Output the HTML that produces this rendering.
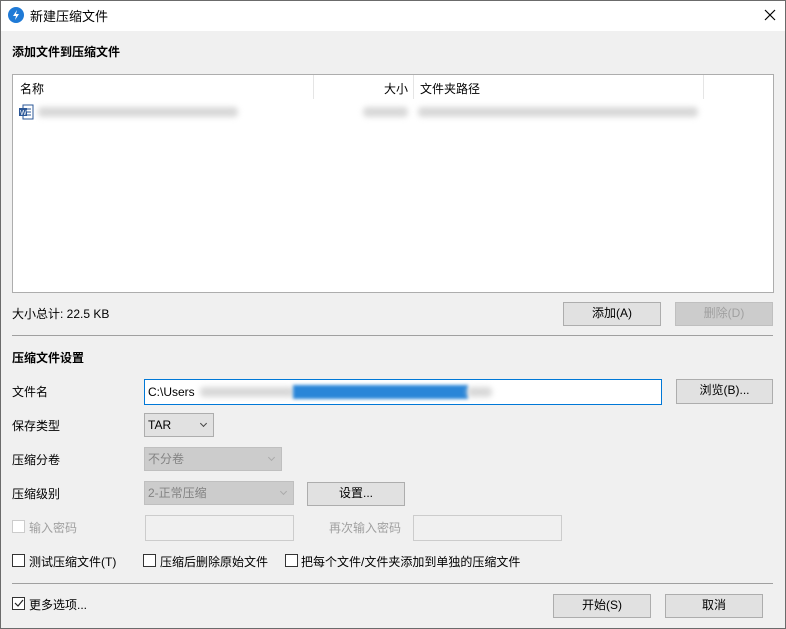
<!DOCTYPE html><html><head><meta charset="utf-8"><style>
*{box-sizing:border-box;margin:0;padding:0}
body{width:786px;height:629px;overflow:hidden;font-family:"Liberation Sans","Noto Sans CJK SC",sans-serif;font-size:12px;color:#000;background:#f0f0f0;position:relative}
.win{position:absolute;left:0;top:0;width:786px;height:629px;background:#f0f0f0}
.frame{position:absolute;left:0;top:0;width:786px;height:629px;border:1px solid #6b6b6b;z-index:5}
.title{position:absolute;left:0;top:0;width:786px;height:31px;background:#fff}
.a{position:absolute;white-space:nowrap}
.btn{position:absolute;background:#e1e1e1;border:1px solid #adadad;text-align:center;line-height:21px;height:24px}
.dis{color:#a0a0a0;background:#cccccc;border-color:#bfbfbf}
.sel{position:absolute;border:1px solid #adadad;background:#e1e1e1;height:24px;line-height:23px;padding-left:3px}
.sel.d{background:#cccccc;border-color:#bfbfbf;color:#838383}
.chev{position:absolute;right:7px;top:7px;width:5px;height:5px;border-right:1px solid #444;border-bottom:1px solid #444;transform:rotate(45deg)}
.sel.d .chev{border-color:#aaa}
.cb{position:absolute;width:13px;height:13px;border:1px solid #333;background:#fff}
.hr{position:absolute;left:12px;width:761px;height:1px;background:#a0a0a0}
.blur{position:absolute;height:10px;background:#d8d8d8;filter:blur(3px);border-radius:4px}
</style></head><body><div class="win">
<div class="title">
<svg class="a" style="left:8px;top:7px" width="16" height="16" viewBox="0 0 16 16"><circle cx="8" cy="8" r="8" fill="#1f7ad6"/><path d="M9 3L5 9h3l-1 4 4-6H8z" fill="#fff"/></svg>
<div class="a" style="left:30px;top:6px;font-size:13px">新建压缩文件</div>
<svg class="a" style="left:764px;top:9px" width="12" height="12"><path d="M1 1L11 11M11 1L1 11" stroke="#000" stroke-width="1.2"/></svg>
</div>
<div class="a" style="left:12px;top:43px;font-weight:bold">添加文件到压缩文件</div>
<div class="a" style="left:12px;top:74px;width:762px;height:219px;background:#fff;border:1px solid #adadad">
<div class="a" style="left:7px;top:5px">名称</div>
<div class="a" style="left:300px;top:0;width:1px;height:24px;background:#e5e5e5"></div>
<div class="a" style="left:371px;top:5px">大小</div>
<div class="a" style="left:400px;top:0;width:1px;height:24px;background:#e5e5e5"></div>
<div class="a" style="left:407px;top:5px">文件夹路径</div>
<div class="a" style="left:690px;top:0;width:1px;height:24px;background:#e5e5e5"></div>
<svg class="a" style="left:5px;top:29px" width="16" height="16" viewBox="0 0 16 16"><rect x="5" y="1" width="10" height="14" fill="#fff" stroke="#2b5797"/><path d="M8 5h5M8 8h5M8 11h5" stroke="#2b5797"/><rect x="1" y="4" width="8" height="8" fill="#2b5797"/><text x="2" y="11" font-size="7" fill="#fff" font-family="Liberation Sans">W</text></svg>
<div class="blur" style="left:25px;top:32px;width:200px"></div>
<div class="blur" style="left:350px;top:32px;width:45px"></div>
<div class="blur" style="left:405px;top:32px;width:280px"></div>
</div>
<div class="a" style="left:12px;top:305px">大小总计: 22.5 KB</div>
<div class="btn" style="left:563px;top:302px;width:98px">添加(A)</div>
<div class="btn dis" style="left:675px;top:302px;width:98px">删除(D)</div>
<div class="hr" style="top:335px"></div>
<div class="a" style="left:12px;top:349px;font-weight:bold">压缩文件设置</div>
<div class="a" style="left:12px;top:383px">文件名</div>
<div class="a" style="left:144px;top:379px;width:518px;height:26px;background:#fff;border:1px solid #0078d7">
<div class="a" style="left:3px;top:5px">C:\Users</div>
<div class="blur" style="left:55px;top:7px;width:95px"></div>
<div class="a" style="left:148px;top:5px;width:175px;height:14px;background:#2a86d8;filter:blur(1.5px)"></div>
<div class="blur" style="left:322px;top:7px;width:25px"></div>
</div>
<div class="btn" style="left:676px;top:379px;width:97px;height:25px">浏览(B)...</div>
<div class="a" style="left:12px;top:417px">保存类型</div>
<div class="sel" style="left:144px;top:413px;width:70px">TAR<span class="chev"></span></div>
<div class="a" style="left:12px;top:451px">压缩分卷</div>
<div class="sel d" style="left:144px;top:447px;width:138px">不分卷<span class="chev"></span></div>
<div class="a" style="left:12px;top:485px">压缩级别</div>
<div class="sel d" style="left:144px;top:481px;width:150px">2-正常压缩<span class="chev"></span></div>
<div class="btn" style="left:307px;top:482px;width:98px">设置...</div>
<div class="cb" style="left:12px;top:520px;border-color:#ccc"></div>
<div class="a" style="left:29px;top:519px;color:#a0a0a0">输入密码</div>
<div class="a" style="left:145px;top:515px;width:149px;height:26px;background:#f0f0f0;border:1px solid #ccc"></div>
<div class="a" style="left:329px;top:519px;color:#a0a0a0">再次输入密码</div>
<div class="a" style="left:413px;top:515px;width:149px;height:26px;background:#f0f0f0;border:1px solid #ccc"></div>
<div class="cb" style="left:12px;top:554px"></div><div class="a" style="left:29px;top:553px">测试压缩文件(T)</div>
<div class="cb" style="left:143px;top:554px"></div><div class="a" style="left:160px;top:553px">压缩后删除原始文件</div>
<div class="cb" style="left:285px;top:554px"></div><div class="a" style="left:301px;top:553px">把每个文件/文件夹添加到单独的压缩文件</div>
<div class="hr" style="top:583px"></div>
<div class="cb" style="left:12px;top:597px"><svg style="position:absolute;left:0;top:0" width="11" height="11"><path d="M2 5l3 3 5-6" stroke="#222" fill="none" stroke-width="1.2"/></svg></div>
<div class="a" style="left:29px;top:596px">更多选项...</div>
<div class="btn" style="left:553px;top:594px;width:98px">开始(S)</div>
<div class="btn" style="left:665px;top:594px;width:98px">取消</div>
</div><div class="frame"></div></body></html>
